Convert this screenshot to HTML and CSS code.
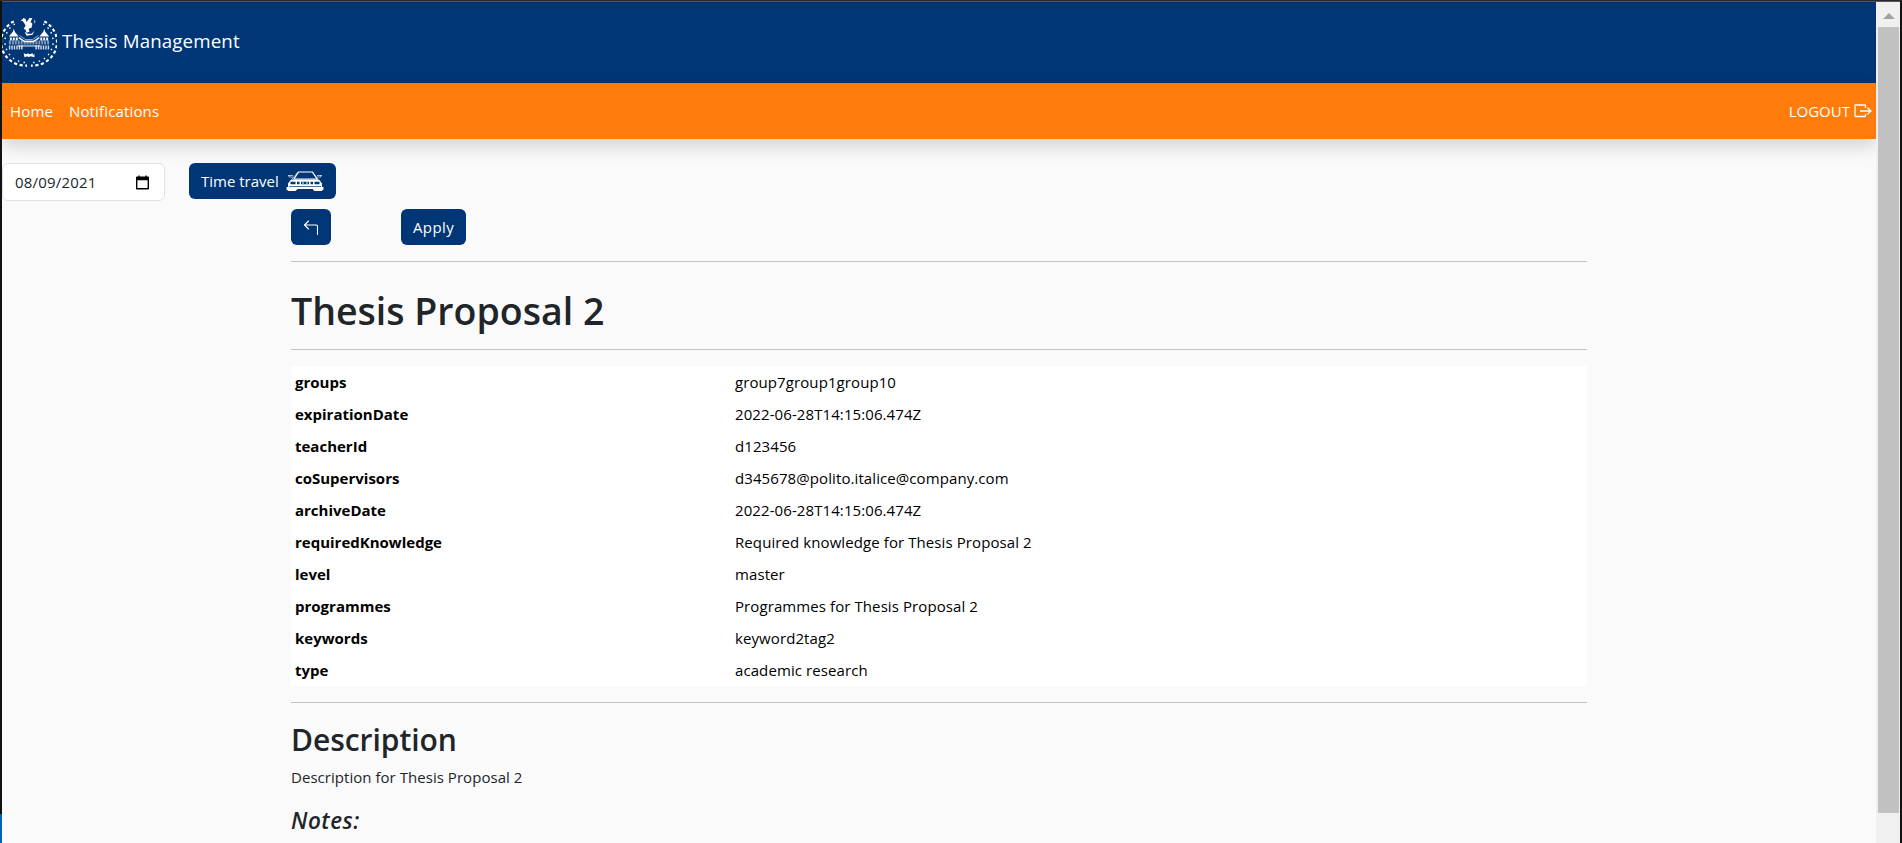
FILE: index.html
```html
<!DOCTYPE html>
<html lang="en">
<head>
<meta charset="utf-8">
<title>Thesis Management</title>
<link rel="stylesheet" href="styles.css">
</head>
<body>
<div class="window">
  <div class="edge-left"></div>
  <div class="page">
    <header class="brand-bar">
      <svg class="logo" viewBox="0 0 56 56" fill="none" stroke="#fff">
        <g stroke-width="2.200" stroke-dasharray="3.200 2.600">
          <path d="M12 6.500A25 24 0 0 0 25.500 51.500"/>
          <path d="M43 6.500A25 24 0 0 1 29.500 51.500"/>
        </g>
        <g stroke-width="1.500" stroke-dasharray="1.500 4.300">
          <path d="M13 9A22 21.500 0 0 0 26 48.500"/>
          <path d="M42 9A22 21.500 0 0 1 29 48.500"/>
        </g>
        <g fill="#fff" stroke="none">
          <path d="M22 3l2 1 1 3 3-4 3 0-2 4 2 2-1 4-3 1 1 3-3 1-1-3-2-1 2-3-1-2-2-3-2 0z"/>
          <path d="M33 4l1 3-1 2zM23 17l3 2 4 0 3-3-2 4-6 1z"/>
          <path d="M12 14l1 3 4 5H7l4-5zM43 14l1 3 4 5H38l4-5z"/>
          <path d="M8 23h2v3H8zM11 23h2v3h-2zM14 23h2v3h-2zM39 23h2v3h-2zM42 23h2v3h-2zM45 23h2v3h-2z"/>
          <path d="M22 39l3 1 1-1 2 1 3-1 1 2 1-2v4l-4-1-2 1-1-1-3 1z"/>
        </g>
        <path stroke-width="1.500" d="M17 23l6 4h9l6-4"/>
        <path stroke-width="1" opacity=".6" d="M18 21l6 4h7l6-4"/>
        <path stroke-width="4" stroke-dasharray="2 1" opacity=".5" d="M7 28h41"/>
        <path stroke-width="4" stroke-dasharray="1.500 1" opacity=".8" d="M7 33h14M34 33h14"/>
        <path stroke-width="2" opacity=".5" d="M16 31.500h23"/>
      </svg>
      <span class="brand">Thesis Management</span>
    </header>
    <nav class="nav-bar">
      <a class="home">Home</a>
      <a class="notifications">Notifications</a>
      <a class="logout"><span>LOGOUT</span>
        <svg width="18" height="14" viewBox="0 0 18 14" preserveAspectRatio="none" fill="none" stroke="#fff" stroke-width="1.300"><path d="M11.500 4V1.500Q11.500 1 11 1H1.500Q1 1 1 1.500v10.500q0 .5.500.5H11q.5 0 .5-.5V10M6 7h11M13.500 3.700L17 7l-3.500 3.300"/></svg>
      </a>
    </nav>
    <div class="time-row">
      <div class="date-input"><span>08/09/2021</span>
        <svg width="13" height="15" viewBox="0 0 14 15"><path d="M2.500 0H4v1h6V0h1.500v1H13q1 0 1 1v12q0 1-1 1H1q-1 0-1-1V2q0-1 1-1h1.500zM1.500 5v8.500h11V5z" fill="#000" fill-rule="evenodd"/></svg>
      </div>
      <button class="btn travel"><span>Time travel</span>
        <svg width="38" height="21" viewBox="0 0 38 21" fill="none" stroke="#fff">
          <path d="M12.500 1h14L31 8H8z" stroke-width="1.200"/>
          <path d="M2 4.500h5M31 4.500h5M3 4v2h4M35 4v2h-4M12 1L6 8M26 1l6 7" stroke-width=".8" opacity=".8"/>
          <path d="M5 8.500h28l3 4v4H2v-4z" fill="#fff" stroke="none"/>
          <path d="M4.500 12h5M28.500 12h5M11 12h2.500M24.500 12H27M15 12h8" stroke="#003576" stroke-width="2.500"/>
          <path d="M16 12h2M20 12h2" stroke="#fff"/>
          <path d="M3 15.500h32" stroke="#003576" stroke-width=".7"/>
          <path d="M.5 16h37v2.500l-2 1.500h-7l-2-2h-15l-2 2h-7l-2-1.500z" fill="#fff" stroke="none"/>
        </svg>
      </button>
    </div>
    <main class="content">
      <div class="actions">
        <button class="btn back"><svg width="16" height="16" viewBox="0 0 16 16" fill="none" stroke="#fff" stroke-width="1.100" stroke-linecap="round" stroke-linejoin="round"><path d="M14.500 15.500V7q0-1-1-1H1.500M5.500 2L1.500 6l4 4"/></svg></button>
        <button class="btn apply">Apply</button>
      </div>
      <hr>
      <h1>Thesis Proposal 2</h1>
      <hr>
      <table>
        <tr><th>groups</th><td>group7group1group10</td></tr>
        <tr><th>expirationDate</th><td>2022-06-28T14:15:06.474Z</td></tr>
        <tr><th>teacherId</th><td>d123456</td></tr>
        <tr><th>coSupervisors</th><td>d345678@polito.italice@company.com</td></tr>
        <tr><th>archiveDate</th><td>2022-06-28T14:15:06.474Z</td></tr>
        <tr><th>requiredKnowledge</th><td>Required knowledge for Thesis Proposal 2</td></tr>
        <tr><th>level</th><td>master</td></tr>
        <tr><th>programmes</th><td>Programmes for Thesis Proposal 2</td></tr>
        <tr><th>keywords</th><td>keyword2tag2</td></tr>
        <tr><th>type</th><td>academic research</td></tr>
      </table>
      <hr>
      <h2>Description</h2>
      <p class="description">Description for Thesis Proposal 2</p>
      <h4>Notes:</h4>
    </main>
  </div>
  <div class="scrollbar"><div class="arrow"></div><div class="thumb"></div></div>
</div>
</body>
</html>
```
FILE: styles.css
```css
* { box-sizing: border-box; }
body {
  margin: 0;
  height: 843px;
  overflow: hidden;
  font-family: "Open Sans", "Noto Sans", sans-serif;
  font-size: 15px;
  line-height: 24px;
  color: #212529;
  background: #111;
}
.window {
  display: grid;
  grid-template-columns: 2px 1874px 24px 2px;
  height: 843px;
  border-top: 1px solid #2b2b2b;
}
.edge-left { background: linear-gradient(#111 813px, #0063b5 813px); }
.page { background: #fafafa; border-top: 1px solid #555; overflow: hidden; height: 842px; }
.brand-bar {
  display: flex;
  align-items: center;
  height: 81px;
  background: #003576;
  color: #fff;
}
.logo { width: 55px; height: 55px; }
.brand { font-size: 18.700px; letter-spacing: .15px; margin-left: 5px; padding-bottom: 4px; }
.nav-bar {
  display: flex;
  align-items: center;
  height: 56px;
  padding: 0 4px 0 8px;
  background: #ff7c0a;
  color: #fff;
  box-shadow: 0 8px 16px rgba(0, 0, 0, .15);
}
.home, .notifications { letter-spacing: .15px; }
.notifications { margin-left: 16px; }
.logout { display: flex; align-items: center; gap: 4px; margin-left: auto; }
.time-row { display: flex; align-items: flex-start; height: 46px; margin-top: 24px; gap: 24px; }
.date-input {
  display: flex;
  align-items: center;
  justify-content: space-between;
  width: 163px;
  height: 38px;
  padding: 0 15px 0 12px;
  background: #fff;
  border: 1px solid #dee2e6;
  border-radius: 6px;
  letter-spacing: .2px;
}
.btn {
  display: flex;
  align-items: center;
  justify-content: center;
  height: 36px;
  padding: 0 12px;
  border: 0;
  border-radius: 6px;
  background: #003576;
  color: #fff;
  font: inherit;
}
.travel { width: 147px; justify-content: space-between; }
.travel span { white-space: nowrap; }
.content { width: 1296px; margin-left: 289px; }
.actions { display: flex; gap: 70px; }
.back { width: 40px; }
.apply { width: 65px; letter-spacing: .4px; }
hr { height: 1px; margin: 16px 0; border: 0; background: #c0c2c3; }
h1, h2, h4 { font-weight: 600; }
h1 { margin: 27px 0 0; font-size: 37.500px; line-height: 44px; letter-spacing: 0; }
h2 { margin: 0 0 6px; padding-top: 2px; font-size: 30px; line-height: 38px; letter-spacing: -.05px; }
h4 { margin: 17px 0 0; font-size: 22.500px; line-height: 30px; font-style: italic; letter-spacing: .5px; }
.description { margin: 0; letter-spacing: .04px; }
table { width: 100%; border-spacing: 0; background: #fff; color: #000; }
th, td { height: 32px; padding: 4px; text-align: left; }
th { width: 440px; }
td { letter-spacing: .09px; }
.scrollbar { background: #f0f0f0; padding: 11px 1px 0 2px; border-top: 1px solid #555; }
.arrow {
  width: 0;
  height: 0;
  margin: 0 auto;
  border: 6px solid transparent;
  border-top: 0;
  border-bottom-color: #a3a3a3;
}
.thumb { height: 786px; margin-top: 8px; background: #c1c1c1; }
```
